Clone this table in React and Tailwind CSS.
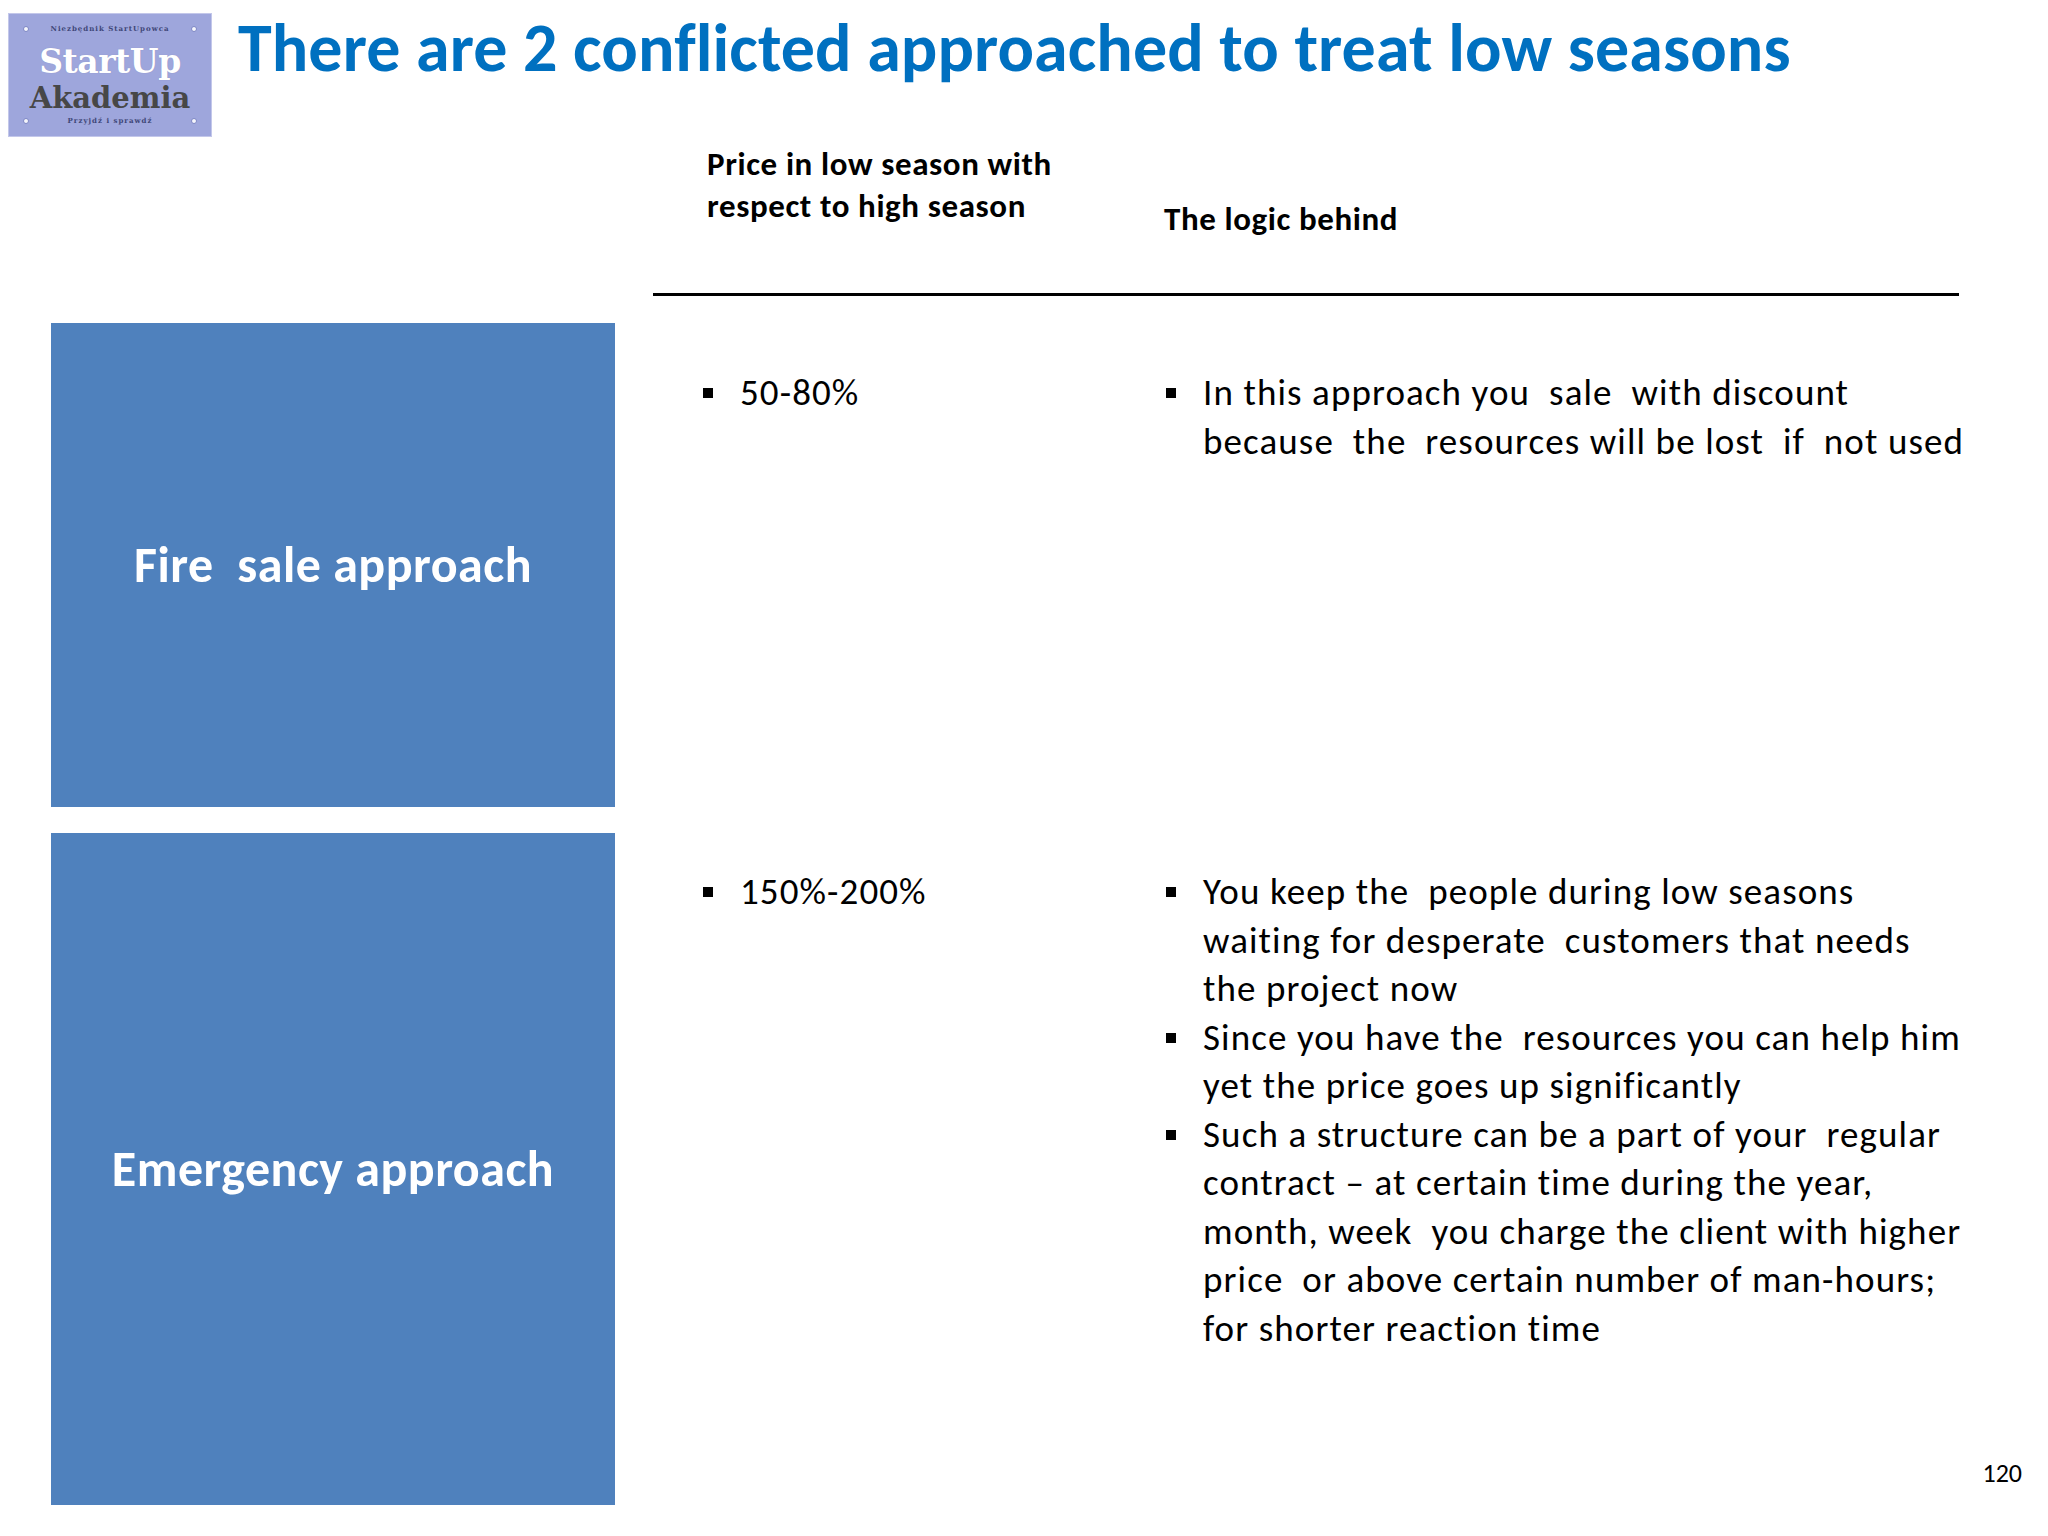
import React from "react";

const Dot = () => (
  <span className="block w-[6px] h-[6px] rounded-full bg-white/90 border border-[#7d86c4]" />
);

const Logo = () => {
  return (
    <div className="ml-[8px] mt-[13px] w-[204px] h-[124px] bg-[#9ea6dc] border border-[#c3c7ea] flex flex-col px-[14px] pt-[8px] font-['DejaVu_Serif',serif]">
      <div className="flex items-center justify-between h-[14px]">
        <Dot />
        <span className="text-[7px] font-bold tracking-[1px] text-[#3f4778]">Niezbędnik StartUpowca</span>
        <Dot />
      </div>
      <div className="text-center text-white font-bold text-[33px] leading-[38px] tracking-[-0.5px] mt-[7px] [text-shadow:0_0_1px_#8a8fbf]">
        StartUp
      </div>
      <div className="text-center text-[#474747] font-bold text-[29px] leading-[34px]">
        Akademia
      </div>
      <div className="flex items-center justify-between h-[12px]">
        <Dot />
        <span className="text-[7px] font-bold tracking-[1px] text-[#3f4778]">Przyjdź i sprawdź</span>
        <Dot />
      </div>
    </div>
  );
};

const Bullet = ({ lines }) => (
  <div className="flex">
    <span className="w-[37px] h-[48.5px] flex items-center shrink-0">
      <span className="block w-[10px] h-[10px] bg-black" />
    </span>
    <div>
      {lines.map((l, i) => (
        <div key={i} className="whitespace-pre">
          {l}
        </div>
      ))}
    </div>
  </div>
);

const Box = ({ label, h }) => (
  <div className={`w-[564px] ${h} shrink-0 bg-[#4f81bd] flex items-center justify-center`}>
    <span className="text-white font-bold text-[50px] tracking-[0.5px] whitespace-pre">{label}</span>
  </div>
);

export default function App() {
  return (
    <div className="w-[2048px] h-[1536px] bg-white overflow-hidden text-black font-['Carlito','Calibri','Lato',sans-serif]">
      {/* Title */}
      <div className="flex items-start h-[137px]">
        <Logo />
        <h1 className="ml-[26px] mt-[14px] text-[68px] leading-[68px] tracking-[0.1px] font-bold text-[#0070c0] whitespace-nowrap">
          There are 2 conflicted approached to treat low seasons
        </h1>
      </div>

      {/* Column headers */}
      <div className="flex pt-[6px] h-[103px] text-[33px] leading-[42px] tracking-[0.6px] font-bold">
        <div className="ml-[707px] w-[457px]">
          Price in low season with
          <br />
          respect to high season
        </div>
        <div className="mt-[55px]">The logic behind</div>
      </div>
      <div className="mt-[53px] ml-[653px] w-[1306px] h-[3px] bg-black" />

      {/* Rows */}
      <div className="mt-[27px] ml-[51px] flex flex-col gap-[26px] text-[37px] leading-[48.5px] tracking-[1.1px]">
        <div className="flex">
          <Box label="Fire  sale approach" h="h-[484px]" />
          <div className="ml-[88px] w-[463px] pt-[46px]">
            <Bullet lines={["50-80%"]} />
          </div>
          <div className="pt-[46px]">
            <Bullet
              lines={[
                "In this approach you  sale  with discount",
                "because  the  resources will be lost  if  not used",
              ]}
            />
          </div>
        </div>

        <div className="flex">
          <Box label="Emergency approach" h="h-[672px]" />
          <div className="ml-[88px] w-[463px] pt-[35px]">
            <Bullet lines={["150%-200%"]} />
          </div>
          <div className="pt-[35px] flex-1 flex flex-col pr-[26px]">
            <Bullet
              lines={[
                "You keep the  people during low seasons",
                "waiting for desperate  customers that needs",
                "the project now",
              ]}
            />
            <Bullet
              lines={[
                "Since you have the  resources you can help him",
                "yet the price goes up significantly",
              ]}
            />
            <Bullet
              lines={[
                "Such a structure can be a part of your  regular",
                "contract – at certain time during the year,",
                "month, week  you charge the client with higher",
                "price  or above certain number of man-hours;",
                "for shorter reaction time",
              ]}
            />
            <div className="mt-auto mb-[16px] self-end text-[26px] leading-[32px] tracking-normal">120</div>
          </div>
        </div>
      </div>
    </div>
  );
}
